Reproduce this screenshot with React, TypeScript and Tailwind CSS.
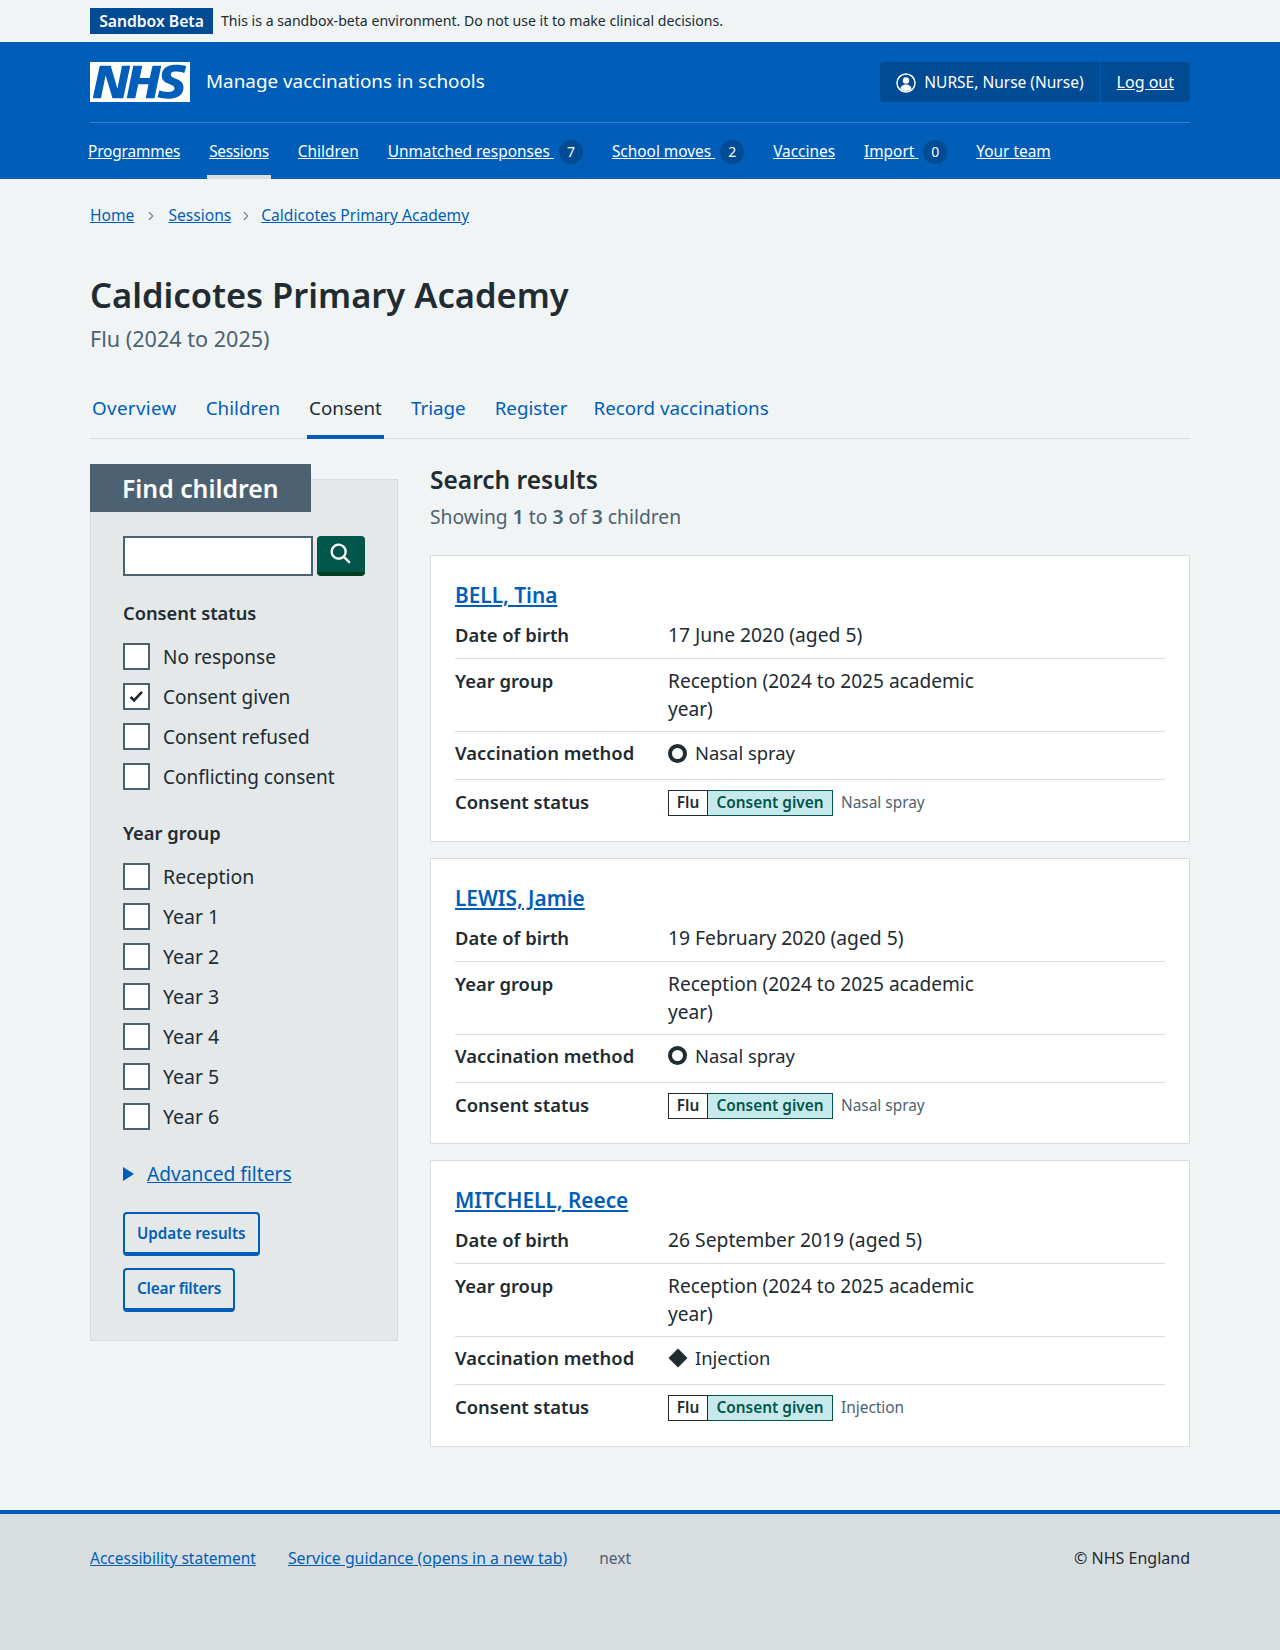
import { ChevronRight } from 'lucide-react'

const font = { fontFamily: '"Noto Sans", sans-serif' }

const navItems = [
    { label: 'Programmes', tracking: 'tracking-[-0.15px]' },
    { label: 'Sessions', active: true, tracking: 'tracking-[-0.3px]' },
    { label: 'Children' },
    { label: 'Unmatched responses', count: 7 },
    { label: 'School moves', count: 2 },
    { label: 'Vaccines' },
    { label: 'Import', count: 0 },
    { label: 'Your team' },
]

const tabs = ['Overview', 'Children', 'Consent', 'Triage', 'Register', 'Record vaccinations']

const consentOptions = ['No response', 'Consent given', 'Consent refused', 'Conflicting consent']
const yearOptions = ['Reception', 'Year 1', 'Year 2', 'Year 3', 'Year 4', 'Year 5', 'Year 6']

const children = [
    { name: 'BELL, Tina', dob: '17 June 2020 (aged 5)', method: 'Nasal spray' },
    { name: 'LEWIS, Jamie', dob: '19 February 2020 (aged 5)', method: 'Nasal spray' },
    { name: 'MITCHELL, Reece', dob: '26 September 2019 (aged 5)', method: 'Injection' },
]

function NhsLogo() {
    return (
        <svg className="w-[100px] h-[40px] shrink-0" viewBox="0 0 40 16" preserveAspectRatio="none">
            <path fill="#fff" d="M0 0h40v16H0z" />
            <path
                fill="#005eb8"
                d="M3.9 1.5h4.4l2.6 9h.1l1.8-9h3.3l-2.8 13H9l-2.7-9h-.1l-1.8 9H1.1M17.3 1.5h3.6l-1 4.9h4L25 1.5h3.5l-2.7 13h-3.5l1.1-5.6h-4.1l-1.2 5.6h-3.4M37.7 4.4c-.7-.3-1.6-.6-2.9-.6-1.4 0-2.5.2-2.5 1.3 0 1.8 5.1 1.2 5.1 5.1 0 3.6-3.3 4.5-6.4 4.5-1.3 0-2.9-.3-4-.7l.8-2.7c.7.4 2.1.7 3.2.7s2.8-.2 2.8-1.5c0-2.1-5.1-1.3-5.1-5 0-3.4 2.9-4.4 5.8-4.4 1.6 0 3.1.2 4 .6"
            />
        </svg>
    )
}

function UserIcon() {
    return (
        <svg className="w-5 h-5" viewBox="0 0 20 20">
            <circle cx="10" cy="10" r="9" fill="none" stroke="#fff" strokeWidth="1.5" />
            <circle cx="10" cy="7.5" r="3.2" fill="#fff" />
            <path fill="#fff" d="M4.6 16c0-3 2.4-4.6 5.4-4.6s5.4 1.6 5.4 4.6a9 9 0 0 1-10.8 0z" />
        </svg>
    )
}

function Checkbox({ label, checked, size }: { label: string; checked?: boolean; size: string }) {
    return (
        <div className="flex items-center h-[27px] mb-[13px]">
            <span className="w-[27px] h-[27px] border-2 border-[#4c6272] bg-white flex items-center justify-center shrink-0">
                {checked && (
                    <svg className="w-[17px] h-[17px]" viewBox="0 0 17 17" fill="none" stroke="#212b32" strokeWidth="2.6">
                        <path d="M2.5 9l3.6 3.4L14 3.8" />
                    </svg>
                )}
            </span>
            <span className={`ml-[13px] leading-7 text-[#212b32] ${size}`}>{label}</span>
        </div>
    )
}

function Row({ label, pad, children }: { label: string; pad: string; children: React.ReactNode }) {
    return (
        <div className={`flex ${pad}`}>
            <div className="w-[30%] pr-4 text-[18.4px] leading-7 font-semibold text-[#212b32]">{label}</div>
            <div className="w-[50%] text-[19.1px] leading-7 text-[#212b32]">{children}</div>
        </div>
    )
}

function ChildCard({ name, dob, method }: { name: string; dob: string; method: string }) {
    return (
        <div className="bg-white border border-[#d8dde0] px-6 pt-[23px] h-[286.5px]">
            <a href="#" className="block text-[20.8px] leading-[32px] font-semibold text-[#005eb8] underline mb-[2px]">
                {name}
            </a>
            <Row label="Date of birth" pad="border-b border-[#d8dde0] pt-[8px] pb-[9px]">
                <span className="text-[19.3px]">{dob}</span>
            </Row>
            <Row label="Year group" pad="border-b border-[#d8dde0] pt-[8px] pb-[8px]">
                <span className="block max-w-[320px]">Reception (2024 to 2025 academic year)</span>
            </Row>
            <Row label="Vaccination method" pad="border-b border-[#d8dde0] pt-[7px] pb-[12px]">
                <span className="flex items-center text-[18.4px]">
                    {method === 'Injection' ? (
                        <svg className="w-[20px] h-[20px] mr-[7px]" viewBox="0 0 20 20">
                            <path fill="#212b32" d="M10 0.5l9.500 9.500-9.500 9.500L0.500 10z" />
                        </svg>
                    ) : (
                        <span className="w-[19px] h-[19px] mr-[8px] rounded-full border-[4px] border-[#212b32] bg-white" />
                    )}
                    {method}
                </span>
            </Row>
            <Row label="Consent status" pad="pt-[8px]">
                <span className="flex items-center h-[26px] mt-[2px] text-[15.4px]">
                    <span className="h-[26px] w-[40px] text-center border border-[#212b32] bg-white leading-6 font-semibold text-[#212b32]">
                        Flu
                    </span>
                    <span className="h-[26px] w-[125px] text-center border border-l-0 border-[#00564b] bg-[#c8e9ec] leading-6 font-semibold text-[#00564b]">
                        Consent given
                    </span>
                    <span className="ml-2 leading-6 text-[#4c6272]">{method}</span>
                </span>
            </Row>
        </div>
    )
}

export default function App() {
    return (
        <div className="min-h-[1650px] bg-[#f0f4f5] text-[#212b32] flex flex-col" style={font}>
            {/* sandbox banner */}
            <div className="h-[42px] flex items-start pt-2">
                <div className="w-[1100px] mx-auto flex items-center">
                    <span className="h-[26px] w-[123px] text-center bg-[#004b93] text-white text-[15.7px] leading-[26px] font-semibold">Sandbox Beta</span>
                    <span className="ml-2 text-[14.1px] leading-[26px] text-[#212b32]">
                        This is a sandbox-beta environment. Do not use it to make clinical decisions.
                    </span>
                </div>
            </div>

            {/* header */}
            <header className="bg-[#005eb8] h-[137px] text-white">
                <div className="w-[1100px] mx-auto">
                    <div className="flex items-center justify-between pt-5 pb-5 border-b border-[#3d7fc6] h-[81px]">
                        <div className="flex items-center">
                            <NhsLogo />
                            <span className="ml-4 text-[18.85px] leading-7 -mt-[2px]">Manage vaccinations in schools</span>
                        </div>
                        <div className="flex h-10 bg-[#004b93] rounded-[4px] text-[15.5px]">
                            <div className="flex items-center gap-2 px-4 pt-px border-r border-[#005eb8]">
                                <UserIcon />
                                NURSE, Nurse (Nurse)
                            </div>
                            <a href="#" className="flex items-center px-4 text-[16px] underline">Log out</a>
                        </div>
                    </div>
                    <nav className="flex h-[56px] gap-[25px] -ml-1 text-[15.4px]">
                        {navItems.map(item => (
                            <div
                                key={item.label}
                                className={`flex items-center px-[2px] pt-[5px] border-b-4 ${item.active ? 'border-[#d8dde0]' : 'border-transparent'}`}
                            >
                                <a href="#" className={`underline whitespace-pre ${item.tracking ?? ''}`}>
                                    {item.label}
                                    {item.count !== undefined ? ' ' : ''}
                                </a>
                                {item.count !== undefined && (
                                    <span className="ml-[5px] w-6 h-6 rounded-full bg-[#004b93] text-[14px] flex items-center justify-center">
                                        {item.count}
                                    </span>
                                )}
                            </div>
                        ))}
                    </nav>
                </div>
            </header>

            <main className="w-[1100px] mx-auto flex-1">
                {/* breadcrumb */}
                <div className="flex items-center h-6 mt-[25px] text-[15.6px] text-[#005eb8]">
                    <a href="#" className="underline">Home</a>
                    <ChevronRight className="w-[14px] h-[14px] mx-[10px] text-[#768692]" />
                    <a href="#" className="underline">Sessions</a>
                    <ChevronRight className="w-[14px] h-[14px] mx-[8px] text-[#768692]" />
                    <a href="#" className="underline">Caldicotes Primary Academy</a>
                </div>

                <h1 className="mt-[43px] text-[34.5px] leading-[48px] font-semibold text-[#212b32]">Caldicotes Primary Academy</h1>
                <p className="mt-[4px] text-[21.6px] leading-8 text-[#4c6272]">Flu (2024 to 2025)</p>

                {/* secondary nav */}
                <div className="flex gap-[25px] mt-[22px] h-[62px] border-b border-[#d8dde0] text-[18.8px] text-[#005eb8]">
                    {tabs.map(tab => (
                        <div
                            key={tab}
                            className={`flex items-center h-[62px] px-[2px] pt-1 border-b-4 ${tab === 'Consent' ? 'border-[#005eb8] text-[#212b32]' : 'border-transparent'} ${tab === 'Overview' ? 'tracking-[0.35px]' : ''} ${tab === 'Record vaccinations' ? '-ml-[3px]' : ''}`}
                        >
                            {tab}
                        </div>
                    ))}
                </div>

                <div className="flex gap-8 items-start mt-[25px]">
                    {/* filters */}
                    <aside className="w-[308px] mt-[15px] h-[862px] bg-[#e4e8e9] border border-[#d8dde0] shrink-0">
                        <div className="-mt-[16px] -ml-px w-[221px] h-[48px] bg-[#4c6272] text-white text-[24.8px] leading-[48px] font-semibold pl-[32px]">
                            Find children
                        </div>
                        <div className="pl-[32px] pr-[32px]">
                            <div className="flex mt-[24px] gap-1">
                                <div className="w-[190px] h-10 bg-white border-2 border-[#4c6272]" />
                                <button type="button" className="w-12 h-10 bg-[#00564b] border-b-4 border-[#00401e] rounded-[4px] flex items-center justify-center">
                                    <svg className="w-[28px] h-[28px]" viewBox="0 0 24 24" fill="#fff">
                                        <path d="M19.71 18.29l-4.11-4.1a7 7 0 1 0-1.41 1.41l4.1 4.11a1 1 0 0 0 1.42 0 1 1 0 0 0 0-1.42zM5 10a5 5 0 1 1 5 5 5 5 0 0 1-5-5z" />
                                    </svg>
                                </button>
                            </div>
                            <div className="mt-[23px] mb-[16px] text-[18.3px] leading-7 font-semibold">Consent status</div>
                            {consentOptions.map(option => (
                                <Checkbox key={option} label={option} size="text-[19px]" checked={option === 'Consent given'} />
                            ))}
                            <div className="mt-[29px] mb-[16px] text-[18.3px] leading-7 font-semibold">Year group</div>
                            {yearOptions.map(option => (
                                <Checkbox key={option} label={option} size="text-[19.5px]" />
                            ))}
                            <div className="flex items-center mt-[30px] text-[19.2px] leading-7 text-[#005eb8]">
                                <span className="w-0 h-0 border-y-[7px] border-y-transparent border-l-[11px] border-l-[#005eb8]" />
                                <a href="#" className="ml-[13px] underline">Advanced filters</a>
                            </div>
                            <button type="button" className="block mt-[24px] h-[44px] px-3 bg-transparent border-2 border-b-4 border-[#005eb8] rounded-[4px] text-[15.2px] font-semibold text-[#005eb8]">
                                Update results
                            </button>
                            <button type="button" className="block mt-3 h-[44px] px-3 bg-transparent border-2 border-b-4 border-[#005eb8] rounded-[4px] text-[15.4px] tracking-[-0.2px] font-semibold text-[#005eb8]">
                                Clear filters
                            </button>
                        </div>
                    </aside>

                    {/* results */}
                    <section className="flex-1">
                        <h2 className="text-[24.5px] leading-8 font-semibold text-[#212b32]">Search results</h2>
                        <p className="mt-[7px] text-[19.3px] leading-7 text-[#4c6272]">
                            Showing <b className="font-semibold">1</b> to <b className="font-semibold">3</b> of <b className="font-semibold">3</b> children
                        </p>
                        <div className="mt-[24px] flex flex-col gap-[16px]">
                            {children.map(child => (
                                <ChildCard key={child.name} {...child} />
                            ))}
                        </div>
                    </section>
                </div>
            </main>

            {/* footer */}
            <footer className="h-[140px] bg-[#d8dde0] border-t-4 border-[#005eb8]">
                <div className="w-[1100px] mx-auto flex items-center justify-between pt-[32px] text-[15.5px] leading-6">
                    <div className="flex gap-8 items-center">
                        <a href="#" className="underline text-[#005eb8]">Accessibility statement</a>
                        <a href="#" className="text-[15.85px] underline text-[#005eb8]">Service guidance (opens in a new tab)</a>
                        <span className="text-[#4c6272]">next</span>
                    </div>
                    <span className="text-[16px] text-[#212b32]">© NHS England</span>
                </div>
            </footer>
        </div>
    )
}
